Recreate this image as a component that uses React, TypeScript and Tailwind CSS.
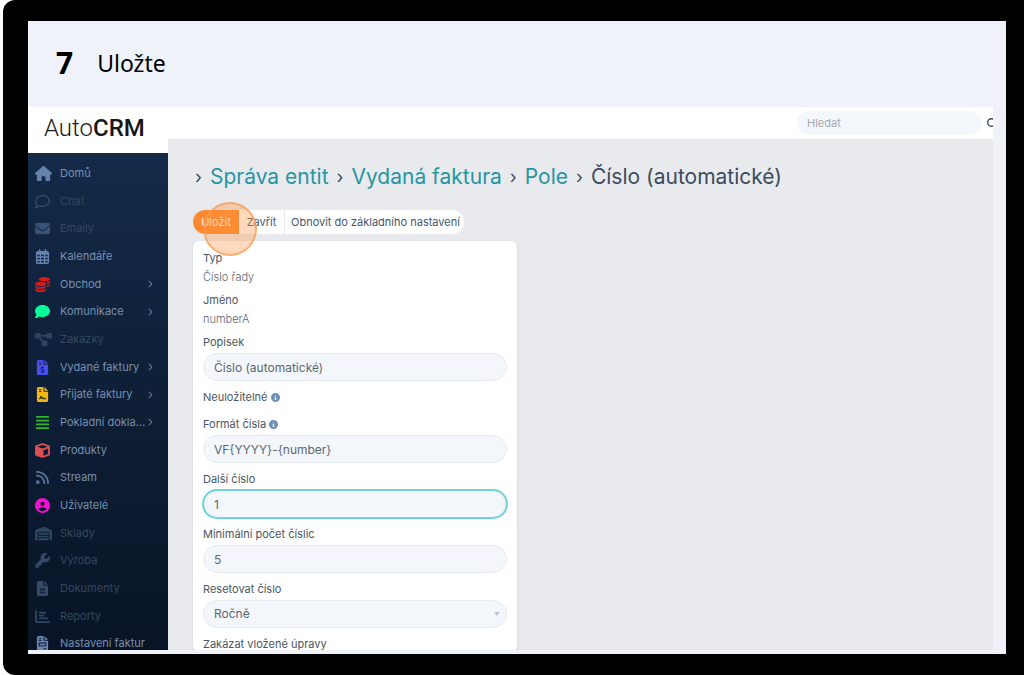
import type { ReactNode } from "react";
import type { IconType } from "react-icons";
import {
    FaAlignJustify,
    FaChartBar,
    FaChevronRight,
    FaCircleInfo,
    FaCircleUser,
    FaCoins,
    FaComment,
    FaCube,
    FaDiagramProject,
    FaEnvelope,
    FaFileContract,
    FaFileInvoice,
    FaFileInvoiceDollar,
    FaFileLines,
    FaHouse,
    FaMagnifyingGlass,
    FaRegCalendarDays,
    FaRegComment,
    FaRss,
    FaWarehouse,
    FaWrench,
} from "react-icons/fa6";

type NavItem = {
    label: string;
    icon: IconType;
    iconColor: string;
    wide?: boolean;
    muted?: boolean;
    expandable?: boolean;
};

const NAV_ITEMS: NavItem[] = [
    { label: "Domů", icon: FaHouse, iconColor: "text-[#6482ab]", wide: true },
    { label: "Chat", icon: FaRegComment, iconColor: "text-[#344a69]", muted: true },
    { label: "Emaily", icon: FaEnvelope, iconColor: "text-[#3a5276]", muted: true },
    { label: "Kalendáře", icon: FaRegCalendarDays, iconColor: "text-[#6482ab]" },
    { label: "Obchod", icon: FaCoins, iconColor: "text-[#d41a1f]", expandable: true },
    { label: "Komunikace", icon: FaComment, iconColor: "text-[#08fb98]", expandable: true },
    { label: "Zakázky", icon: FaDiagramProject, iconColor: "text-[#30435e]", wide: true, muted: true },
    { label: "Vydané faktury", icon: FaFileInvoiceDollar, iconColor: "text-[#4a4ff0]", expandable: true },
    { label: "Přijaté faktury", icon: FaFileContract, iconColor: "text-[#f5b60f]", expandable: true },
    { label: "Pokladní dokla…", icon: FaAlignJustify, iconColor: "text-[#2fb62f]", expandable: true },
    { label: "Produkty", icon: FaCube, iconColor: "text-[#dc4f50]" },
    { label: "Stream", icon: FaRss, iconColor: "text-[#5a7393]" },
    { label: "Uživatelé", icon: FaCircleUser, iconColor: "text-[#f20fd0]" },
    { label: "Sklady", icon: FaWarehouse, iconColor: "text-[#2f4560]", wide: true, muted: true },
    { label: "Výroba", icon: FaWrench, iconColor: "text-[#344a67]", muted: true },
    { label: "Dokumenty", icon: FaFileLines, iconColor: "text-[#344a67]", muted: true },
    { label: "Reporty", icon: FaChartBar, iconColor: "text-[#2f4560]", muted: true },
    { label: "Nastavení faktur", icon: FaFileInvoice, iconColor: "text-[#6482ab]" },
];

function Sidebar() {
    return (
        <nav className="min-h-0 flex-1 bg-gradient-to-b from-[#142a48] to-[#081426] pt-[6px]">
            {NAV_ITEMS.map(({ label, icon: Icon, iconColor, wide, muted, expandable }, i) => (
                <a
                    key={label}
                    href="#"
                    className={`flex items-center pl-[7px] pr-[14px] ${i % 3 === 2 ? "h-[27px]" : "h-7"}`}
                >
                    <span className="flex w-[25px] shrink-0">
                        <Icon className={`shrink-0 ${wide ? "size-[17px]" : "size-[15px]"} ${iconColor}`} />
                    </span>
                    <span
                        className={`whitespace-nowrap text-[11px] ${muted ? "text-[#33475f]" : "text-[#7890b0]"}`}
                    >
                        {label}
                    </span>
                    {expandable && <FaChevronRight className="ml-auto size-2 shrink-0 text-[#6f88a8]" />}
                </a>
            ))}
        </nav>
    );
}

function Label({ htmlFor, info, children }: { htmlFor?: string; info?: boolean; children: ReactNode }) {
    return (
        <label htmlFor={htmlFor} className="flex h-4 items-center gap-[3px] text-[11px] text-[#4a5663]">
            {children}
            {info && <FaCircleInfo className="size-[9px] text-[#6f8fb5]" />}
        </label>
    );
}

const FIELD = "mt-[3px] block h-7 w-full rounded-full border bg-[#f3f7fb] px-[10px] text-xs text-[#5c6670] outline-none";

function TextField({ id, label, value, info, focused }: {
    id: string;
    label: string;
    value: string;
    info?: boolean;
    focused?: boolean;
}) {
    return (
        <div className="mb-2">
            <Label htmlFor={id} info={info}>{label}</Label>
            <input
                id={id}
                type="text"
                defaultValue={value}
                className={`${FIELD} ${focused ? "border-[#6fd3dc] ring-1 ring-[#6fd3dc]" : "border-[#e6ebf1]"}`}
            />
        </div>
    );
}

function StaticField({ label, value }: { label: string; value: string }) {
    return (
        <div className="mb-[7px]">
            <div className="h-4 text-[11px] leading-4 text-[#4a5663]">{label}</div>
            <div className="mt-[3px] h-4 text-[11px] font-light leading-4 text-[#5c6670]">{value}</div>
        </div>
    );
}

function Crumb({ children }: { children: ReactNode }) {
    return (
        <>
            <span className="text-lg text-[#3c4b5e]">›</span>
            <a href="#" className="text-[#2795a3]">{children}</a>
        </>
    );
}

export default function App() {
    return (
        <div className="h-screen overflow-hidden bg-white pl-[3px] font-['Inter',sans-serif]">
            <div className="h-full rounded-l-xl bg-black pb-[21px] pl-[25px] pr-[18px] pt-[21px]">
                <div className="flex h-full flex-col overflow-hidden bg-[#eff3f9] pb-1">
                    <header className="flex h-[86px] shrink-0 items-center gap-6 pb-[2px] pl-7 font-['Noto_Sans',sans-serif] text-black">
                        <span className="text-3xl font-bold">7</span>
                        <h1 className="text-[23px]">Uložte</h1>
                    </header>

                    <div className="mr-[13px] flex min-h-0 flex-1 overflow-hidden bg-[#e9eaee]">
                        <aside className="flex w-[140px] shrink-0 flex-col">
                            <div className="flex h-[46px] shrink-0 items-center bg-white pb-1 pl-4 font-['Roboto',sans-serif] text-2xl text-[#161616]">
                                <span className="font-light">Auto</span>
                                <span className="font-medium">CRM</span>
                            </div>
                            <Sidebar />
                        </aside>

                        <div className="flex min-w-0 flex-1 flex-col">
                            <div className="flex h-8 shrink-0 items-center justify-end overflow-hidden bg-white">
                                <input
                                    type="search"
                                    aria-label="Hledat"
                                    placeholder="Hledat"
                                    className="h-6 w-[184px] rounded-full bg-[#f4f7fb] px-[10px] text-[11px] outline-none placeholder:text-[#a5a8ad]"
                                />
                                <button type="button" aria-label="Vyhledat" className="w-3 shrink-0 overflow-hidden pl-[6px]">
                                    <FaMagnifyingGlass className="size-[11px] text-[#3c4b5e]" />
                                </button>
                            </div>

                            <main className="min-h-0 flex-1 overflow-hidden pl-[25px]">
                                <h2 className="mt-[22px] flex h-8 items-center gap-2 whitespace-nowrap pl-[2px] text-[21px] text-[#3c4b5e]">
                                    <Crumb>Správa entit</Crumb>
                                    <Crumb>Vydaná faktura</Crumb>
                                    <Crumb>Pole</Crumb>
                                    <span className="text-lg">›</span>
                                    <span>Číslo (automatické)</span>
                                </h2>

                                <div className="relative mt-[17px] flex h-6 w-max text-[11px] text-[#46566a]">
                                    <button type="button" className="w-[46px] rounded-l-full bg-[#fd8a32] text-[#fff3e6]">
                                        Uložit
                                    </button>
                                    <button type="button" className="w-[45px] bg-white">Zavřít</button>
                                    <button type="button" className="rounded-r-full border-l border-[#e9eaee] bg-white pl-[6px] pr-1">
                                        Obnovit do základního nastavení
                                    </button>
                                    {/* click marker */}
                                    <span className="pointer-events-none absolute -top-2 left-[10px] size-[54px] rounded-full border-2 border-[#f79a52]/70 bg-[#fb923c]/35" />
                                </div>

                                <form className="mt-[7px] w-[324px] rounded-md bg-white px-[10px] pt-[9px] shadow-sm">
                                    <StaticField label="Typ" value="Číslo řady" />
                                    <StaticField label="Jméno" value="numberA" />
                                    <TextField id="label" label="Popisek" value="Číslo (automatické)" />
                                    <div className="mb-[11px]">
                                        <Label info>Neuložitelné</Label>
                                    </div>
                                    <TextField id="format" label="Formát čísla" value="VF{YYYY}-{number}" info />
                                    <TextField id="next" label="Další číslo" value="1" focused />
                                    <TextField id="digits" label="Minimální počet číslic" value="5" />
                                    <div className="mb-2">
                                        <Label htmlFor="reset">Resetovat číslo</Label>
                                        <div className="relative">
                                            <select id="reset" defaultValue="yearly" className={`${FIELD} appearance-none border-[#e6ebf1]`}>
                                                <option value="yearly">Ročně</option>
                                            </select>
                                            <svg viewBox="0 0 6 4" className="pointer-events-none absolute right-[7px] top-3 h-1 w-[6px] fill-[#bcc5cf]">
                                                <path d="M0 0h6L3 4z" />
                                            </svg>
                                        </div>
                                    </div>
                                    <Label>Zakázat vložené úpravy</Label>
                                </form>
                            </main>
                        </div>
                    </div>
                </div>
            </div>
        </div>
    );
}
